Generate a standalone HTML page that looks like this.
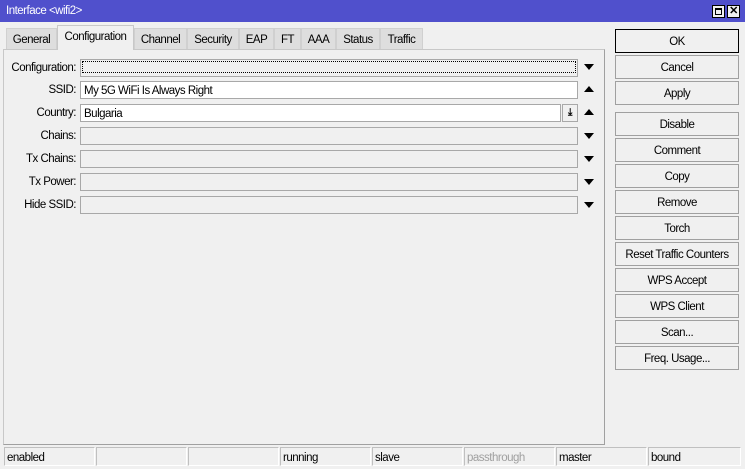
<!DOCTYPE html>
<html><head><style>
*{box-sizing:border-box;margin:0;padding:0}
body{width:745px;height:469px;background:#f0f0f0;font-family:"Liberation Sans",sans-serif;font-size:11.5px;letter-spacing:-0.5px;color:#000;position:relative;overflow:hidden}
.a{position:absolute}
.title{left:0;top:0;width:745px;height:22px;background:#5050cc;color:#fff;padding:5px 6px}
.wb{top:5px;width:13px;height:13px;background:#f0f0f0;border:1px solid #000}
.tab{top:28px;height:21px;background:#dedede;border:1px solid #d0d0d0;border-bottom:none;text-align:center;padding-top:5px}
.tab.act{top:25px;height:25px;background:#f0f0f0;border:1px solid #c8c8c8;border-bottom:none;padding-top:5px}
.panel{left:3px;top:49px;width:602px;height:396px;border-top:1px solid #c8c8c8;border-left:1px solid #c8c8c8;border-right:1px solid #a0a0a0;border-bottom:1px solid #a0a0a0}
.lbl{left:0;width:76px;text-align:right}
.fld{left:80px;width:498px;height:18px;border:1px solid #a8a8a8;background:#f0f0f0;padding:3px 3px 0}
.fld.w{background:#fff}
.dn,.up{width:0;height:0;border-left:5px solid transparent;border-right:5px solid transparent;left:584px}
.dn{border-top:6px solid #000}
.up{border-bottom:6px solid #000}
.btn{left:615px;width:124px;height:24px;border:1px solid #a0a0a0;background:#f0f0f0;text-align:center;padding-top:6px}
.st{top:447px;height:19px;border:1px solid #c0c0c0;border-right-color:#fff;border-bottom-color:#fff;padding:4px 2px 0}
</style></head><body>
<div class="a title">Interface &lt;wifi2&gt;</div>
<div class="a wb" style="left:712px"><div class="a" style="left:2px;top:2px;width:7px;height:7px;border:1px solid #000;border-top-width:2px"></div></div>
<div class="a wb" style="left:727px;font-size:11px;font-weight:bold;text-align:center;line-height:11px">✕</div>
<div class="a panel"></div>
<div class="a tab" style="left:6px;width:51px">General</div>
<div class="a tab act" style="left:57px;width:77px">Configuration</div>
<div class="a tab" style="left:134px;width:53px">Channel</div>
<div class="a tab" style="left:187px;width:52px">Security</div>
<div class="a tab" style="left:239px;width:35px">EAP</div>
<div class="a tab" style="left:274px;width:27px">FT</div>
<div class="a tab" style="left:301px;width:35px">AAA</div>
<div class="a tab" style="left:336px;width:44px">Status</div>
<div class="a tab" style="left:380px;width:43px">Traffic</div>

<div class="a lbl" style="top:62px">Configuration:</div>
<div class="a fld" style="top:59px;padding-top:1px"><div style="border:1px dotted #000;height:12px;margin:0 -2px"></div></div>
<div class="a dn" style="top:64px"></div>
<div class="a lbl" style="top:84px">SSID:</div>
<div class="a fld w" style="top:81px">My 5G WiFi Is Always Right</div>
<div class="a up" style="top:86px"></div>
<div class="a lbl" style="top:107px">Country:</div>
<div class="a fld w" style="top:104px;width:481px">Bulgaria</div>
<div class="a" style="left:562px;top:104px;width:16px;height:18px;border:1px solid #a8a8a8;background:#f0f0f0;font-size:10px;text-align:center;line-height:15px;font-weight:bold">&#x2913;</div>
<div class="a up" style="top:109px"></div>
<div class="a lbl" style="top:130px">Chains:</div>
<div class="a fld" style="top:127px"></div><div class="a dn" style="top:133px"></div>
<div class="a lbl" style="top:153px">Tx Chains:</div>
<div class="a fld" style="top:150px"></div><div class="a dn" style="top:156px"></div>
<div class="a lbl" style="top:176px">Tx Power:</div>
<div class="a fld" style="top:173px"></div><div class="a dn" style="top:179px"></div>
<div class="a lbl" style="top:199px">Hide SSID:</div>
<div class="a fld" style="top:196px"></div><div class="a dn" style="top:202px"></div>

<div class="a btn" style="top:29px;border-color:#000">OK</div>
<div class="a btn" style="top:55px">Cancel</div>
<div class="a btn" style="top:81px">Apply</div>
<div class="a btn" style="top:112px">Disable</div>
<div class="a btn" style="top:138px">Comment</div>
<div class="a btn" style="top:164px">Copy</div>
<div class="a btn" style="top:190px">Remove</div>
<div class="a btn" style="top:216px">Torch</div>
<div class="a btn" style="top:242px">Reset Traffic Counters</div>
<div class="a btn" style="top:268px">WPS Accept</div>
<div class="a btn" style="top:294px">WPS Client</div>
<div class="a btn" style="top:320px">Scan...</div>
<div class="a btn" style="top:346px">Freq. Usage...</div>

<div class="a st" style="left:4px;width:91px">enabled</div>
<div class="a st" style="left:96px;width:91px"></div>
<div class="a st" style="left:188px;width:91px"></div>
<div class="a st" style="left:280px;width:91px">running</div>
<div class="a st" style="left:372px;width:91px">slave</div>
<div class="a st" style="left:464px;width:91px;color:#a0a0a0">passthrough</div>
<div class="a st" style="left:556px;width:91px">master</div>
<div class="a st" style="left:648px;width:93px">bound</div>
</body></html>
